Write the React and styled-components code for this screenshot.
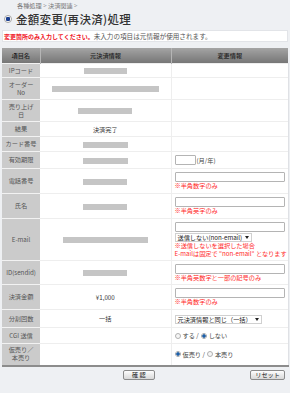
import React from "react";
import styled, { createGlobalStyle } from "styled-components";

const Global = createGlobalStyle`
  html, body { margin: 0; padding: 0; background: #eef0f3; }
  body { font-family: "Noto Sans CJK JP", "Liberation Sans", sans-serif; color: #444; }
`;

const Page = styled.div`
  width: 290px;
  height: 393px;
  overflow: hidden;
  padding: 0 2px;
  box-sizing: border-box;
`;

const Breadcrumb = styled.div`
  padding: 2px 0 0 15px;
  height: 8px;
  font-size: 6.2px;
  line-height: 8px;
  color: #777;
`;

const TitleRow = styled.div`
  display: flex;
  align-items: center;
  gap: 4px;
  height: 18px;
  padding-left: 2px;
`;

const Bullet = styled.span`
  width: 8px;
  height: 8px;
  border-radius: 50%;
  border: 1px solid #a5a5a5;
  background: radial-gradient(circle, #1b3f8f 0 2px, #fff 2.5px);
  box-sizing: border-box;
  flex: none;
`;

const Title = styled.h1`
  margin: 0;
  font-size: 11.5px;
  font-weight: 500;
  color: #333;
  letter-spacing: 0.3px;
`;

const Notice = styled.div`
  margin-top: 2px;
  height: 12px;
  background: #fff;
  border: 1px solid #e2e4e8;
  box-sizing: border-box;
  padding-left: 1px;
  font-size: 6.6px;
  line-height: 10px;
  color: #555;
  white-space: nowrap;
`;

const Em = styled.span`
  color: #f0141e;
  font-weight: 700;
  font-size: 6px;
`;

const Table = styled.table`
  margin-top: 6px;
  width: 286px;
  border-collapse: collapse;
  table-layout: fixed;
  font-size: 6.2px;
  border-bottom: 2px solid #8c8c8c;
`;

const Head = styled.th`
  height: 15px;
  padding: 0;
  font-weight: 500;
  color: #222;
  background: linear-gradient(#a4a4a4, #767676);
  border-left: 1px solid #b5b5b5;
  &:first-child { border-left: none; }
`;

const Row = styled.tr`
  height: ${p => p.h}px;
`;

const Label = styled.td`
  padding: 0;
  background: #cbcbcb;
  color: #555;
  text-align: center;
  line-height: 8px;
  border-top: 1px solid #f2f2f2;
`;

const Orig = styled.td`
  padding: 0;
  background: #fff;
  text-align: center;
  color: #333;
  border-top: 1px solid #eeeeee;
  border-right: 1px solid #eeeeee;
`;

const Change = styled.td`
  padding: 0 0 0 3px;
  background: #fff;
  color: #333;
  border-top: 1px solid #eeeeee;
  border-right: 1px solid #dfe1e5;
`;

const Mask = styled.span`
  display: inline-block;
  vertical-align: middle;
  width: ${p => p.w}px;
  height: 6px;
  background: #c5c5c5;
`;

const Input = styled.span`
  display: block;
  width: ${p => p.w || 110}px;
  height: 10px;
  border: 1px solid #b4b4b4;
  border-radius: 1px;
  background: #fff;
  box-sizing: border-box;
`;

const Inline = styled.div`
  display: flex;
  align-items: center;
  gap: 1px;
  color: #444;
`;

const Note = styled.div`
  color: #ff2a2a;
  font-size: 6.2px;
  line-height: 7.5px;
  white-space: nowrap;
`;

const Select = styled.span`
  display: inline-flex;
  align-items: center;
  height: 9px;
  margin: 1px 0 0;
  padding: 0 2px;
  gap: 3px;
  border: 1px solid #d0d0d0;
  background: #fff;
  box-sizing: border-box;
  font-size: 6.2px;
  color: #222;
  white-space: nowrap;
  &::after {
    content: "";
    border-left: 2px solid transparent;
    border-right: 2px solid transparent;
    border-top: 3px solid #222;
  }
`;

const Radios = styled.div`
  display: flex;
  align-items: center;
  gap: 2px;
  color: #444;
`;

const Radio = styled.span`
  width: 6px;
  height: 6px;
  border-radius: 50%;
  border: 1px solid #b0b0b0;
  box-sizing: border-box;
  background: ${p => (p.on ? "radial-gradient(circle, #1d5fa8 0 1.5px, #fff 2px)" : "#f6f6f6")};
`;

const Buttons = styled.div`
  display: flex;
  align-items: center;
  padding-top: 3px;
`;

const Button = styled.button`
  height: 10px;
  padding: 0 ${p => p.px}px;
  margin-left: ${p => p.ml};
  margin-right: ${p => p.mr || 0}px;
  border: 1px solid #8a8a8a;
  border-radius: 2px;
  background: linear-gradient(#fdfdfd, #d8d8d8);
  font-family: inherit;
  font-size: 6.2px;
  line-height: 8px;
  color: #222;
`;

const red = t => <Note>{t}</Note>;

export default function App() {
  return (
    <Page>
      <Global />
      <Breadcrumb>各種処理 &gt; 決済関連 &gt;</Breadcrumb>
      <TitleRow>
        <Bullet />
        <Title>金額変更(再決済)処理</Title>
      </TitleRow>
      <Notice>
        <Em>変更箇所のみ入力してください。</Em>未入力の項目は元情報が使用されます。
      </Notice>
      <Table>
        <colgroup>
          <col style={{ width: 38 }} />
          <col style={{ width: 131 }} />
          <col style={{ width: 117 }} />
        </colgroup>
        <thead>
          <tr>
            <Head>項目名</Head>
            <Head>元決済情報</Head>
            <Head>変更情報</Head>
          </tr>
        </thead>
        <tbody>
          <Row h={14}>
            <Label>IPコード</Label>
            <Orig><Mask w={43} /></Orig>
            <Change />
          </Row>
          <Row h={22}>
            <Label>オーダー<br />No</Label>
            <Orig><Mask w={107} /></Orig>
            <Change />
          </Row>
          <Row h={22}>
            <Label>売り上げ<br />日</Label>
            <Orig><Mask w={54} /></Orig>
            <Change />
          </Row>
          <Row h={15}>
            <Label>結果</Label>
            <Orig>決済完了</Orig>
            <Change />
          </Row>
          <Row h={15}>
            <Label>カード番号</Label>
            <Orig><Mask w={45} /></Orig>
            <Change />
          </Row>
          <Row h={17}>
            <Label>有効期限</Label>
            <Orig><Mask w={45} /></Orig>
            <Change>
              <Inline><Input w={21} />(月/年)</Inline>
            </Change>
          </Row>
          <Row h={25}>
            <Label>電話番号</Label>
            <Orig><Mask w={44} /></Orig>
            <Change><Input />{red("※半角数字のみ")}</Change>
          </Row>
          <Row h={25}>
            <Label>氏名</Label>
            <Orig><Mask w={44} /></Orig>
            <Change><Input />{red("※半角英字のみ")}</Change>
          </Row>
          <Row h={42}>
            <Label>E-mail</Label>
            <Orig><Mask w={85} /></Orig>
            <Change>
              <Input />
              <Select>送信しない(non-email)</Select>
              {red("※送信しないを選択した場合")}
              {red("E-mailは固定で \"non-email\" となります")}
            </Change>
          </Row>
          <Row h={24}>
            <Label>ID(sendid)</Label>
            <Orig><Mask w={44} /></Orig>
            <Change><Input />{red("※半角英数字と一部の記号のみ")}</Change>
          </Row>
          <Row h={25}>
            <Label>決済金額</Label>
            <Orig>¥1,000</Orig>
            <Change><Input />{red("※半角数字のみ")}</Change>
          </Row>
          <Row h={18}>
            <Label>分割回数</Label>
            <Orig>一括</Orig>
            <Change><Select>元決済情報と同じ（一括）</Select></Change>
          </Row>
          <Row h={16}>
            <Label>CGI 送信</Label>
            <Orig />
            <Change>
              <Radios><Radio />する / <Radio on />しない</Radios>
            </Change>
          </Row>
          <Row h={22}>
            <Label>仮売り／<br />本売り</Label>
            <Orig />
            <Change>
              <Radios><Radio on />仮売り / <Radio />本売り</Radios>
            </Change>
          </Row>
        </tbody>
      </Table>
      <Buttons>
        <Button px={8} ml="121px">確 認</Button>
        <Button px={4} ml="auto" mr={3}>リセット</Button>
      </Buttons>
    </Page>
  );
}
